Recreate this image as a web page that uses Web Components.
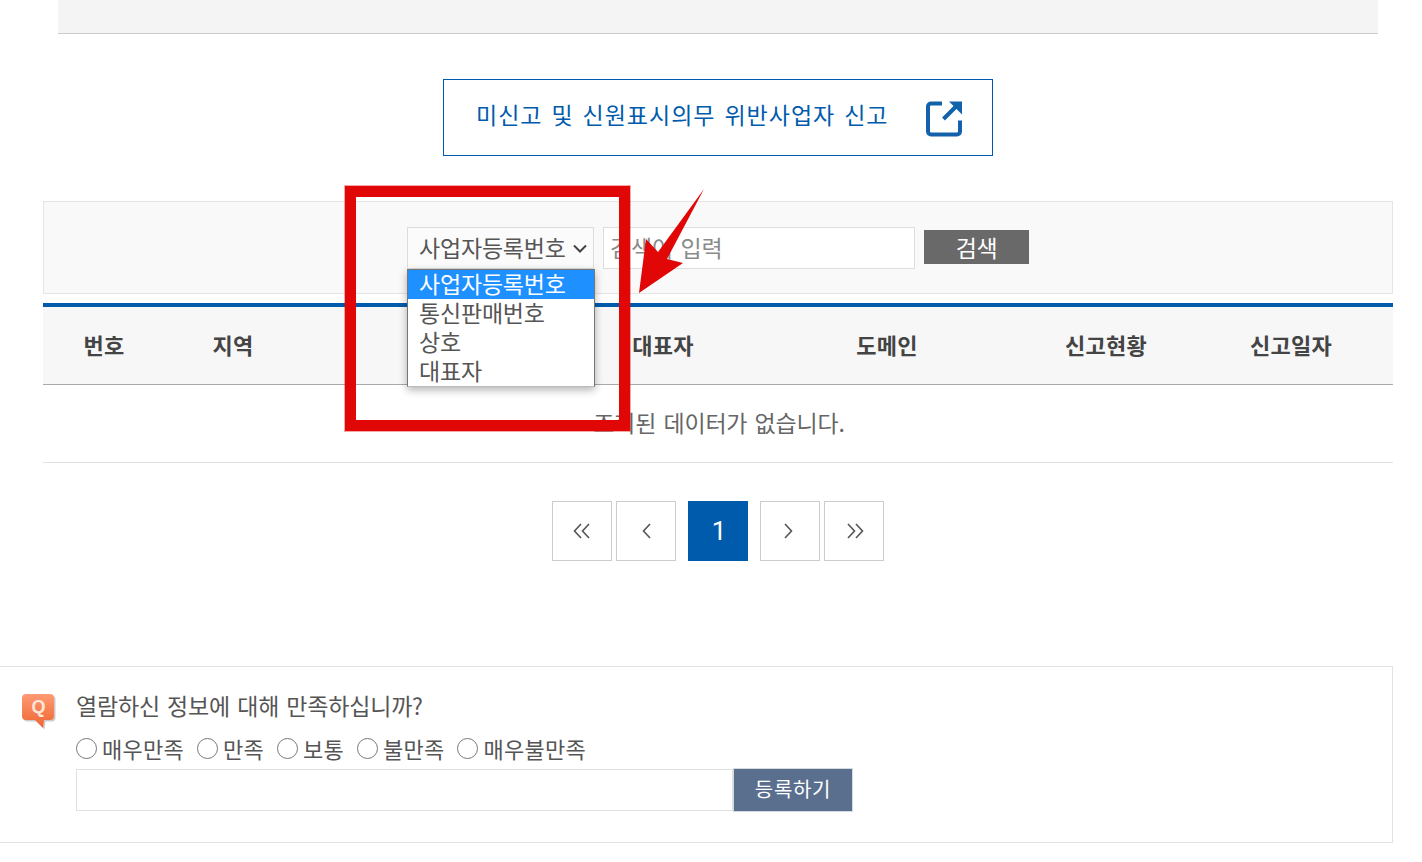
<!DOCTYPE html>
<html lang="ko">
<head>
<meta charset="utf-8">
<title>신고현황</title>
<style>
    html, body { margin: 0; padding: 0; background: #fff; }
    body {
        width: 1422px;
        height: 862px;
        overflow: hidden;
        position: relative;
        font-family: "Noto Sans CJK KR", "Noto Sans", sans-serif;
        color: #555;
    }
</style>
</head>
<body>
<top-band></top-band>
<report-link>미신고 및 신원표시의무 위반사업자 신고</report-link>
<search-bar></search-bar>
<report-table></report-table>
<page-nav></page-nav>
<survey-box></survey-box>
<red-callout></red-callout>

<script>
class TopBand extends HTMLElement {
    connectedCallback() {
        this.attachShadow({ mode: 'open' });
        this.shadowRoot.innerHTML = `
            <style>
                :host {
                    display: block;
                    height: 33px;
                    margin: 0 44px 0 58px;
                    background: #f4f4f4;
                    border-bottom: 1px solid #ccc;
                }
            </style>
        `;
    }
}
customElements.define('top-band', TopBand);

class ReportLink extends HTMLElement {
    connectedCallback() {
        this.attachShadow({ mode: 'open' });
        this.shadowRoot.innerHTML = `
            <style>
                :host {
                    display: flex;
                    align-items: center;
                    justify-content: space-between;
                    box-sizing: border-box;
                    width: 550px;
                    height: 77px;
                    margin: 45px 0 0 443px;
                    padding: 0 29px 0 32px;
                    border: 1px solid #005bac;
                    color: #005bac;
                    font-size: 23px;
                    letter-spacing: 1px;
                    word-spacing: 1.5px;
                }
                span { position: relative; top: -4px; white-space: nowrap; }
                svg { display: block; }
            </style>
            <span><slot></slot></span>
            <svg width="38" height="38" viewBox="0 0 38 38" fill="none">
                <path d="M17 4.500H6a3 3 0 0 0-3 3V32.500a3 3 0 0 0 3 3h26a3 3 0 0 0 3-3V21.500" stroke="#1262ab" stroke-width="4"/>
                <path d="M18.500 20L32 6.500" stroke="#1262ab" stroke-width="4"/>
                <path d="M24 2.500h13v13z" fill="#1262ab"/>
            </svg>
        `;
    }
}
customElements.define('report-link', ReportLink);

class SearchBar extends HTMLElement {
    connectedCallback() {
        this.attachShadow({ mode: 'open' });
        this.shadowRoot.innerHTML = `
            <style>
                :host {
                    display: flex;
                    box-sizing: border-box;
                    position: relative;
                    width: 1350px;
                    height: 93px;
                    margin: 45px 0 0 43px;
                    padding: 25px 0 0 363px;
                    border: 1px solid #e5e5e5;
                    background: #f9f9f9;
                    font-size: 23px;
                    letter-spacing: -0.2px;
                    color: #555;
                    z-index: 2;
                }
                .select {
                    box-sizing: border-box;
                    width: 187px;
                    height: 42px;
                    padding: 0 0 2px 11px;
                    border: 1px solid #ddd;
                    background: #fbfbfb;
                    display: flex;
                    align-items: center;
                    gap: 7px;
                    white-space: nowrap;
                }
                .select svg { margin-top: 2px; }
                .input {
                    box-sizing: border-box;
                    width: 312px;
                    height: 42px;
                    margin-left: 9px;
                    padding-left: 6px;
                    border: 1px solid #ddd;
                    background: #fff;
                    color: #8a8a8a;
                    line-height: 38px;
                    word-spacing: 1.5px;
                    white-space: nowrap;
                }
                .btn {
                    width: 105px;
                    height: 34px;
                    margin: 3px 0 0 9px;
                    background: #696969;
                    color: #fff;
                    text-align: center;
                    line-height: 34px;
                    letter-spacing: -0.5px;
                }
                .list {
                    position: absolute;
                    left: 363px;
                    top: 67px;
                    width: 186px;
                    background: #fff;
                    border: 1px solid #767676;
                    border-bottom-color: #bbb;
                    box-shadow: 0 3px 8px rgba(0,0,0,.3);
                    color: #555;
                }
                .opt { height: 29px; line-height: 27px; padding-left: 11px; white-space: nowrap; }
                .opt.on { background: #1e90ff; color: #fff; }
            </style>
            <div class="select">사업자등록번호
                <svg width="14" height="9" viewBox="0 0 14 9" fill="none"><path d="M1 1.500L7 7.500l6-6" stroke="#444" stroke-width="2"/></svg>
            </div>
            <div class="input">검색어 입력</div>
            <div class="btn">검색</div>
            <div class="list">
                <div class="opt on">사업자등록번호</div>
                <div class="opt">통신판매번호</div>
                <div class="opt">상호</div>
                <div class="opt">대표자</div>
            </div>
        `;
    }
}
customElements.define('search-bar', SearchBar);

class ReportTable extends HTMLElement {
    connectedCallback() {
        this.attachShadow({ mode: 'open' });
        // third heading sits fully behind the open dropdown in the picture
        this.shadowRoot.innerHTML = `
            <style>
                :host {
                    display: block;
                    width: 1350px;
                    margin: 9px 0 0 43px;
                    border-top: 4px solid #005bac;
                }
                .head {
                    display: grid;
                    grid-template-columns: 122px 136px 274px 176px 272px 166px 1fr;
                    box-sizing: border-box;
                    height: 78px;
                    padding-bottom: 4px;
                    align-items: center;
                    background: #f7f7f7;
                    border-bottom: 1px solid #aaa;
                    font-size: 22px;
                    letter-spacing: 0.3px;
                    font-weight: 700;
                    color: #444;
                    text-align: center;
                }
                .empty {
                    height: 77px;
                    line-height: 75px;
                    text-align: center;
                    border-bottom: 1px solid #e2e2e2;
                    color: #666;
                    font-size: 23px;
                    letter-spacing: -0.2px;
                    word-spacing: 1px;
                    padding-left: 2px;
                }
            </style>
            <div class="head">
                <div>번호</div><div>지역</div><div></div><div>대표자</div><div>도메인</div><div>신고현황</div><div>신고일자</div>
            </div>
            <div class="empty">조회된 데이터가 없습니다.</div>
        `;
    }
}
customElements.define('report-table', ReportTable);

class PageNav extends HTMLElement {
    connectedCallback() {
        this.attachShadow({ mode: 'open' });
        const chev = (d) => `<svg width="20" height="18" viewBox="0 0 20 18" fill="none"><path d="${d}" stroke="#555" stroke-width="1.6"/></svg>`;
        this.shadowRoot.innerHTML = `
            <style>
                :host {
                    display: flex;
                    width: 332px;
                    height: 60px;
                    margin: 38px 0 0 552px;
                    gap: 4px;
                }
                .b {
                    box-sizing: border-box;
                    width: 60px;
                    height: 60px;
                    border: 1px solid #ccc;
                    display: flex;
                    align-items: center;
                    justify-content: center;
                }
                .cur {
                    margin: 0 8px;
                    padding-left: 2px;
                    background: #005bac;
                    border-color: #005bac;
                    color: #fff;
                    font-family: Roboto, sans-serif;
                    font-size: 26px;
                }
            </style>
            <div class="b">${chev('M9 2L2.500 9l6.500 7M17 2l-6.500 7 6.500 7')}</div>
            <div class="b">${chev('M14 2l-6.500 7 6.500 7')}</div>
            <div class="b cur">1</div>
            <div class="b">${chev('M5 2l6.500 7-6.500 7')}</div>
            <div class="b">${chev('M4 2l6.500 7-6.500 7M12 2l6.500 7-6.500 7')}</div>
        `;
    }
}
customElements.define('page-nav', PageNav);

class SurveyBox extends HTMLElement {
    connectedCallback() {
        this.attachShadow({ mode: 'open' });
        const opts = ['매우만족', '만족', '보통', '불만족', '매우불만족'];
        this.shadowRoot.innerHTML = `
            <style>
                :host {
                    display: flex;
                    box-sizing: border-box;
                    width: 1393px;
                    height: 177px;
                    margin-top: 105px;
                    padding: 26px 0 0 21px;
                    border: 1px solid #e3e3e3;
                    border-left: 0;
                    color: #555;
                }
                .q { width: 35px; height: 38px; flex: none; margin-right: 20px; }
                .q text { font-family: "Liberation Sans", sans-serif; font-weight: 700; font-size: 18px; }
                .main { display: flex; flex-direction: column; }
                .title {
                    height: 26px;
                    line-height: 24px;
                    white-space: nowrap;
                    font-size: 23px;
                    letter-spacing: -0.2px;
                    word-spacing: 1px;
                }
                .radios {
                    display: flex;
                    height: 26px;
                    margin-top: 16px;
                    line-height: 26px;
                    white-space: nowrap;
                    font-size: 22px;
                    letter-spacing: 0.25px;
                }
                .radios label { display: flex; align-items: center; margin-right: 13px; }
                .radios i {
                    box-sizing: border-box;
                    width: 21px;
                    height: 21px;
                    margin-right: 5px;
                    border: 1px solid #777;
                    border-radius: 50%;
                    background: #fff;
                }
                .form { display: flex; margin-top: 8px; }
                .field { box-sizing: border-box; width: 657px; height: 42px; border: 1px solid #e0e0e0; }
                .send {
                    box-sizing: border-box;
                    width: 120px;
                    height: 44px;
                    margin-top: -1px;
                    background: #5a6e8e;
                    border: 1px solid #d5d9e0;
                    color: #fff;
                    font-size: 20px;
                    letter-spacing: 0.7px;
                    text-align: center;
                    line-height: 40px;
                }
            </style>
            <svg class="q" viewBox="0 0 35 38">
                <defs><linearGradient id="qg" x1="0" y1="0" x2="0" y2="1"><stop offset="0" stop-color="#ff9a73"/><stop offset="1" stop-color="#ee6632"/></linearGradient></defs>
                <path d="M5 1h24a4 4 0 0 1 4 4v18a4 4 0 0 1-4 4h-6l-1 8-8-8H5a4 4 0 0 1-4-4V5a4 4 0 0 1 4-4z" fill="#999" opacity=".5" transform="translate(1.500 1.500)"/>
                <path d="M5 1h24a4 4 0 0 1 4 4v18a4 4 0 0 1-4 4h-6l-1 8-8-8H5a4 4 0 0 1-4-4V5a4 4 0 0 1 4-4z" fill="url(#qg)"/>
                <text x="17.500" y="20" text-anchor="middle" fill="#ffe6da">Q</text>
            </svg>
            <div class="main">
                <div class="title">열람하신 정보에 대해 만족하십니까?</div>
                <div class="radios">${opts.map(o => `<label><i></i>${o}</label>`).join('')}</div>
                <div class="form"><div class="field"></div><div class="send">등록하기</div></div>
            </div>
        `;
    }
}
customElements.define('survey-box', SurveyBox);

// annotation drawn over the page, its place on the picture is the content
class RedCallout extends HTMLElement {
    connectedCallback() {
        this.attachShadow({ mode: 'open' });
        this.shadowRoot.innerHTML = `
            <style>
                :host { position: absolute; left: 0; top: 0; z-index: 5; }
                .box {
                    position: absolute;
                    left: 345px;
                    top: 186px;
                    box-sizing: border-box;
                    width: 285px;
                    height: 245px;
                    border: 11px solid #e10707;
                    box-shadow: 0 0 0 1px rgba(225,7,7,.35);
                }
                svg { position: absolute; left: 630px; top: 180px; }
            </style>
            <div class="box"></div>
            <svg width="90" height="120" viewBox="630 180 90 120">
                <polygon points="704,189 658,252 646,239 639,293 683,263 667,259" fill="#e10707"/>
            </svg>
        `;
    }
}
customElements.define('red-callout', RedCallout);
</script>
</body>
</html>
